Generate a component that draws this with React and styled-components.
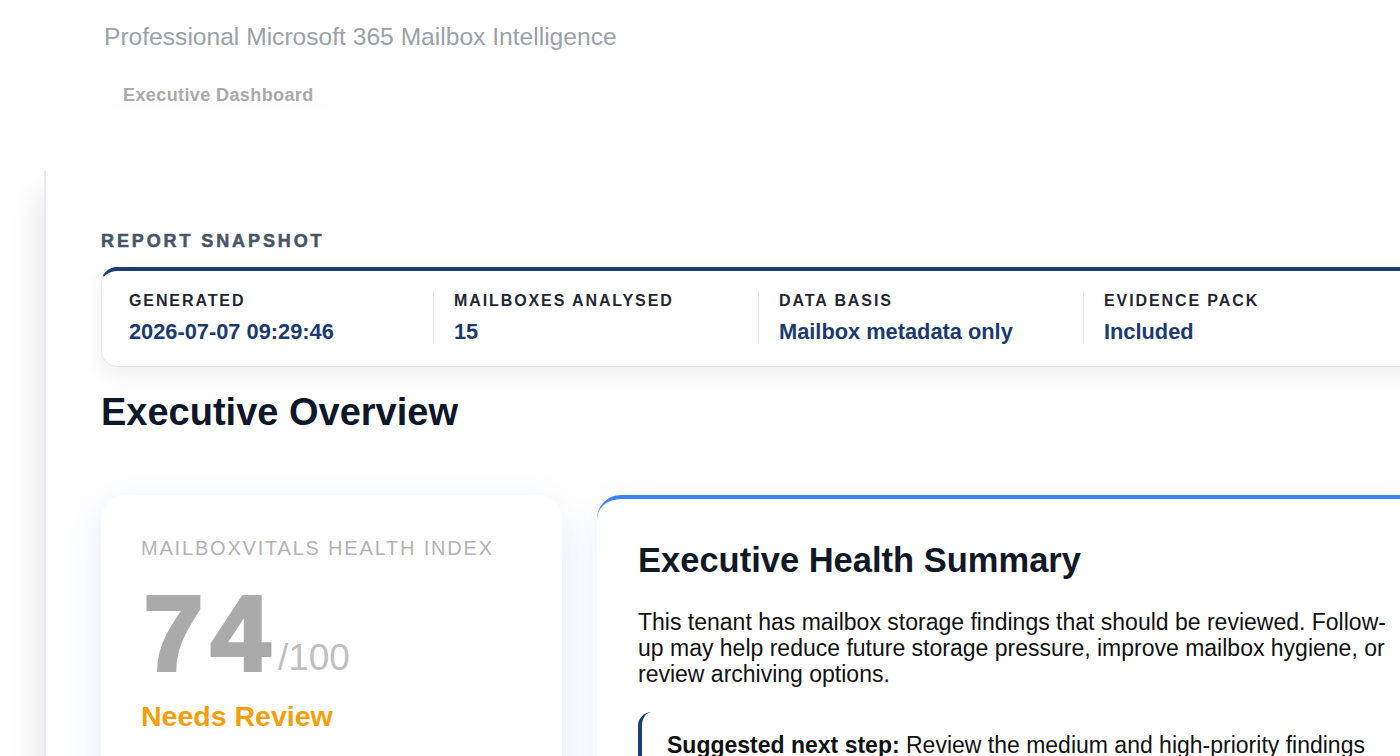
import React from 'react';
import styled, { createGlobalStyle } from 'styled-components';

const GlobalStyle = createGlobalStyle`
  html, body {
    margin: 0;
    padding: 0;
    background: #ffffff;
    overflow: hidden;
  }
  body {
    font-family: 'Liberation Sans', Arial, Helvetica, sans-serif;
    color: #111827;
  }
  * {
    box-sizing: border-box;
  }
`;

const Page = styled.div`
  width: 1400px;
  height: 756px;
  overflow: hidden;
`;

const Header = styled.header`
  padding: 23px 0 0 104px;
`;

const Tagline = styled.p`
  margin: 0;
  font-size: 24.6px;
  line-height: 28px;
  color: #9ba1a9;
`;

const TabRow = styled.nav`
  display: flex;
  margin-top: 29px;
`;

const Tab = styled.span`
  padding: 4px 19px;
  font-size: 18px;
  line-height: 22px;
  font-weight: 700;
  letter-spacing: 0.4px;
  color: #a9a9a9;
  background: #fefefe;
  border-radius: 6px;
`;

const Panel = styled.main`
  margin: 61px 0 0 44px;
  width: 1400px;
  min-height: 600px;
  padding: 59px 0 0 55px;
  border-left: 2px solid #e6ebf3;
  box-shadow: -18px 10px 30px -12px rgba(15, 23, 42, 0.1);
`;

const Content = styled.div`
  width: 1340px;
`;

const Eyebrow = styled.h3`
  margin: 0 0 15px;
  font-size: 18px;
  line-height: 22px;
  font-weight: 700;
  letter-spacing: 2.9px;
  color: #475569;
  text-transform: uppercase;
  -webkit-text-stroke: 0.5px #475569;
`;

const SnapshotCard = styled.section`
  display: grid;
  grid-template-columns: repeat(4, 325px);
  padding: 20px 7px 22px 6px;
  background: #ffffff;
  border: 1px solid #e5e7eb;
  border-top: 4px solid #1c3d72;
  border-radius: 16px;
  box-shadow: 0 8px 22px rgba(15, 23, 42, 0.07);
`;

const SnapshotItem = styled.div`
  padding-left: 20px;
  border-left: ${({ $first }) => ($first ? '1px solid transparent' : '1px solid #e5e7eb')};
`;

const ItemLabel = styled.div`
  font-size: 16px;
  line-height: 20px;
  font-weight: 700;
  letter-spacing: 1.9px;
  color: #1f2733;
  text-transform: uppercase;
`;

const ItemValue = styled.div`
  margin-top: 9px;
  font-size: 21.8px;
  line-height: 24px;
  font-weight: 700;
  color: #1a3a70;
`;

const SectionTitle = styled.h2`
  margin: 23px 0 0;
  font-size: 38px;
  line-height: 44px;
  font-weight: 700;
  color: #0f172a;
`;

const OverviewGrid = styled.div`
  display: grid;
  grid-template-columns: 461px 1fr;
  gap: 35px;
  margin-top: 61px;
  align-items: start;
`;

const HealthCard = styled.section`
  height: 320px;
  padding: 41px 40px;
  background: #ffffff;
  border-radius: 24px;
  box-shadow: 0 12px 40px rgba(59, 88, 160, 0.13);
`;

const HealthLabel = styled.div`
  font-size: 20px;
  line-height: 24px;
  letter-spacing: 1.8px;
  color: #b3b3b3;
  text-transform: uppercase;
`;

const ScoreRow = styled.div`
  display: flex;
  align-items: baseline;
  margin-top: 20px;
`;

const Score = styled.span`
  font-size: 106px;
  line-height: 107px;
  font-weight: 700;
  letter-spacing: 8px;
  color: #aaaaaa;
  -webkit-text-stroke: 4px #aaaaaa;
  padding-left: 3px;
`;

const ScoreMax = styled.span`
  font-size: 37px;
  color: #bfbfbf;
`;

const Status = styled.div`
  margin-top: 12px;
  font-size: 28.5px;
  line-height: 34px;
  font-weight: 700;
  color: #f59e0b;
`;

const SummaryCard = styled.section`
  height: 320px;
  padding: 40px 41px;
  background: #ffffff;
  border-top: 4px solid #3b82f6;
  border-radius: 24px;
  box-shadow: 0 10px 36px rgba(59, 88, 160, 0.08);
`;

const SummaryTitle = styled.h3`
  margin: 0;
  font-size: 34.5px;
  line-height: 42px;
  font-weight: 700;
  color: #111827;
`;

const SummaryText = styled.p`
  margin: 28px 0 0;
  font-size: 23px;
  line-height: 26px;
  color: #111111;
`;

const NextStep = styled.blockquote`
  margin: 25px 0 0;
  padding: 20px 0 0 25px;
  font-size: 23px;
  line-height: 26px;
  color: #111111;
  border-left: 4px solid #1c3d72;
  border-radius: 14px 0 0 0;

  strong {
    font-weight: 700;
  }
`;

const snapshot = [
  { label: 'Generated', value: '2026-07-07 09:29:46' },
  { label: 'Mailboxes Analysed', value: '15' },
  { label: 'Data Basis', value: 'Mailbox metadata only' },
  { label: 'Evidence Pack', value: 'Included' },
];

export default function App() {
  return (
    <Page>
      <GlobalStyle />
      <Header>
        <Tagline>Professional Microsoft 365 Mailbox Intelligence</Tagline>
        <TabRow>
          <Tab>Executive Dashboard</Tab>
        </TabRow>
      </Header>

      <Panel>
        <Content>
          <Eyebrow>Report Snapshot</Eyebrow>
          <SnapshotCard>
            {snapshot.map((item, i) => (
              <SnapshotItem key={item.label} $first={i === 0}>
                <ItemLabel>{item.label}</ItemLabel>
                <ItemValue>{item.value}</ItemValue>
              </SnapshotItem>
            ))}
          </SnapshotCard>

          <SectionTitle>Executive Overview</SectionTitle>

          <OverviewGrid>
            <HealthCard>
              <HealthLabel>MailboxVitals Health Index</HealthLabel>
              <ScoreRow>
                <Score>74</Score>
                <ScoreMax>/100</ScoreMax>
              </ScoreRow>
              <Status>Needs Review</Status>
            </HealthCard>

            <SummaryCard>
              <SummaryTitle>Executive Health Summary</SummaryTitle>
              <SummaryText>
                This tenant has mailbox storage findings that should be reviewed. Follow-up may
                help reduce future storage pressure, improve mailbox hygiene, or review archiving
                options.
              </SummaryText>
              <NextStep>
                <strong>Suggested next step:</strong> Review the medium and high-priority findings
                and confirm which mailboxes need owner follow-up.
              </NextStep>
            </SummaryCard>
          </OverviewGrid>
        </Content>
      </Panel>
    </Page>
  );
}
